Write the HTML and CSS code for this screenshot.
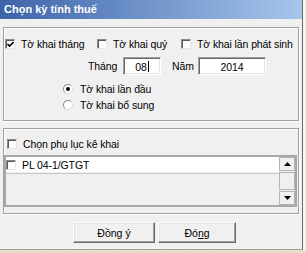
FILE: index.html
```html
<!DOCTYPE html>
<html>
<head>
<meta charset="utf-8">
<link rel="stylesheet" href="styles.css">
</head>
<body>
<div class="window">
  <div class="titlebar">Chọn kỳ tính thuế</div>
  <div class="group group1">
    <div class="row row1">
      <label class="opt opt1"><span class="cb checked"><svg width="7" height="7" viewBox="0 0 7 7"><path d="M0.5 3 L2.5 5 L6.5 1" fill="none" stroke="#000" stroke-width="1.6"/></svg></span><span>Tờ khai tháng</span></label>
      <label class="opt opt2"><span class="cb"></span><span>Tờ khai quý</span></label>
      <label class="opt opt3"><span class="cb"></span><span>Tờ khai lần phát sinh</span></label>
    </div>
    <div class="row row2">
      <span class="lbl lbl-thang">Tháng</span>
      <span class="field field-thang">08<span class="caret"></span></span>
      <span class="lbl lbl-nam">Năm</span>
      <span class="field field-nam">2014</span>
    </div>
    <div class="row radio-row r1">
      <span class="rb on"><span class="dot"></span></span><span>Tờ khai lần đầu</span>
    </div>
    <div class="row radio-row r2">
      <span class="rb"></span><span>Tờ khai bổ sung</span>
    </div>
  </div>
  <div class="group group2">
    <div class="row row-pl">
      <span class="cb"></span><span>Chọn phụ lục kê khai</span>
    </div>
    <div class="list">
      <div class="list-body">
        <div class="item"><span class="cb"></span><span>PL 04-1/GTGT</span></div>
        <div class="item-sep"></div>
      </div>
      <div class="scroll">
        <div class="sbtn"><svg width="7" height="4" viewBox="0 0 7 4"><path d="M3.5 0 L7 4 L0 4 Z" fill="#000"/></svg></div>
        <div class="thumb"></div>
        <div class="track"></div>
        <div class="sbtn"><svg width="7" height="4" viewBox="0 0 7 4"><path d="M0 0 L7 0 L3.5 4 Z" fill="#000"/></svg></div>
      </div>
    </div>
  </div>
  <div class="buttons">
    <button class="btn btn-ok">Đồng ý</button>
    <button class="btn btn-close">Đó<u>n</u>g</button>
  </div>
</div>
<div class="desk"></div>
</body>
</html>
```
FILE: styles.css
```css
html, body {
  margin: 0;
  padding: 0;
}
body {
  width: 306px;
  height: 253px;
  background: #f4f4f4;
  font-family: "Liberation Sans", Arial, sans-serif;
  font-size: 10.5px;
  letter-spacing: -0.1px;
  color: #000;
  overflow: hidden;
}
.window {
  width: 302px;
  height: 249px;
  background: #f0f0f0;
  border-right: 1px solid #6b6b6b;
  border-bottom: 1px solid #a0a0a0;
  display: flex;
  flex-direction: column;
}
.titlebar {
  height: 19px;
  line-height: 19px;
  padding-left: 4px;
  font-size: 11px;
  letter-spacing: 0;
  font-weight: bold;
  color: #fff;
  background: linear-gradient(to right, #3d64a9, #a6c6ec);
}
.group {
  box-sizing: border-box;
  width: 296px;
  margin-left: 3px;
  border: 1px solid #a0a0a0;
  box-shadow: inset 1px 1px #fff, 1px 1px #fff;
  display: flex;
  flex-direction: column;
}
.group1 {
  margin-top: 8px;
  height: 94px;
  padding-top: 9px;
}
.row {
  display: flex;
  align-items: center;
}
.row1 {
  height: 13px;
  padding-left: 1px;
}
.opt {
  display: flex;
  align-items: center;
  white-space: nowrap;
}
.opt1 { width: 92px; }
.opt2 { width: 84px; }
.cb {
  box-sizing: border-box;
  width: 10px;
  height: 10px;
  background: #fff;
  border: 1px solid;
  border-color: #8a8a8a #e6e6e6 #e6e6e6 #8a8a8a;
  box-shadow: inset 1px 1px #5a5a5a;
  margin-right: 6px;
  flex: none;
  display: flex;
  align-items: center;
  justify-content: center;
}
.cb svg { display: block; margin: 1px 0 0 1px; }
.row2 {
  height: 18px;
  margin-top: 7px;
  padding-left: 84px;
}
.lbl-thang { width: 35px; }
.lbl-nam { width: 26px; margin-left: 11px; }
.field {
  box-sizing: border-box;
  height: 18px;
  background: #fff;
  border: 1px solid;
  border-color: #a0a0a0 #fff #fff #a0a0a0;
  box-shadow: inset 1px 1px #696969, inset -1px -1px #e3e3e3;
  display: flex;
  align-items: center;
  justify-content: center;
  padding-top: 1px;
}
.field-thang { width: 38px; }
.field-nam { width: 68px; }
.caret {
  width: 1px;
  height: 11px;
  background: #000;
  margin-left: 1px;
}
.radio-row {
  height: 13px;
  padding-left: 59px;
}
.r1 { margin-top: 7px; }
.r2 { margin-top: 3px; }
.rb {
  box-sizing: border-box;
  width: 10px;
  height: 10px;
  border-radius: 50%;
  background: #fff;
  border: 1px solid;
  border-color: #8a8a8a #dcdcdc #dcdcdc #8a8a8a;
  margin-right: 7px;
  display: flex;
  align-items: center;
  justify-content: center;
}
.dot {
  width: 4px;
  height: 4px;
  border-radius: 50%;
  background: #000;
}
.group2 {
  margin-top: 7px;
  height: 86px;
  padding-top: 9px;
}
.row-pl {
  height: 12px;
  padding-left: 3px;
}
.list {
  box-sizing: border-box;
  margin-top: 5px;
  width: 293px;
  height: 52px;
  border: 2px solid #a7a7a7;
  display: flex;
  background: #f0f0f0;
}
.list-body {
  flex: 1;
  display: flex;
  flex-direction: column;
}
.item {
  height: 15px;
  background: #fff;
  display: flex;
  align-items: center;
}
.item .cb { margin-right: 6px; }
.item-sep {
  height: 1px;
  margin-top: 1px;
  background: #c8c8c8;
}
.scroll {
  width: 16px;
  display: flex;
  flex-direction: column;
}
.sbtn, .thumb {
  box-sizing: border-box;
  border: 1px solid;
  border-color: #fff #a0a0a0 #a0a0a0 #fff;
  background: #f0f0f0;
  outline: 1px solid #b4b4b4;
  outline-offset: -1px;
}
.sbtn {
  height: 14px;
  display: flex;
  align-items: center;
  justify-content: center;
}
.thumb {
  height: 18px;
  margin-top: 1px;
}
.track {
  flex: 1;
}
.buttons {
  display: flex;
  margin-top: 8px;
  padding-left: 73px;
  gap: 3px;
}
.btn {
  box-sizing: border-box;
  height: 21px;
  font-family: "Liberation Sans", Arial, sans-serif;
  font-size: 10.5px;
  color: #000;
  background: #f0f0f0;
  border: 1px solid;
  border-color: #fff #696969 #696969 #fff;
  box-shadow: inset -1px -1px #a0a0a0, inset 1px 1px #e3e3e3;
  padding: 0;
}
.btn-ok { width: 82px; }
.btn-close { width: 78px; }
.desk {
  height: 3px;
  background: repeating-linear-gradient(to right, #e8e2b8 0 2px, #d8e4d0 2px 4px, #f0d8c8 4px 6px);
}
```
